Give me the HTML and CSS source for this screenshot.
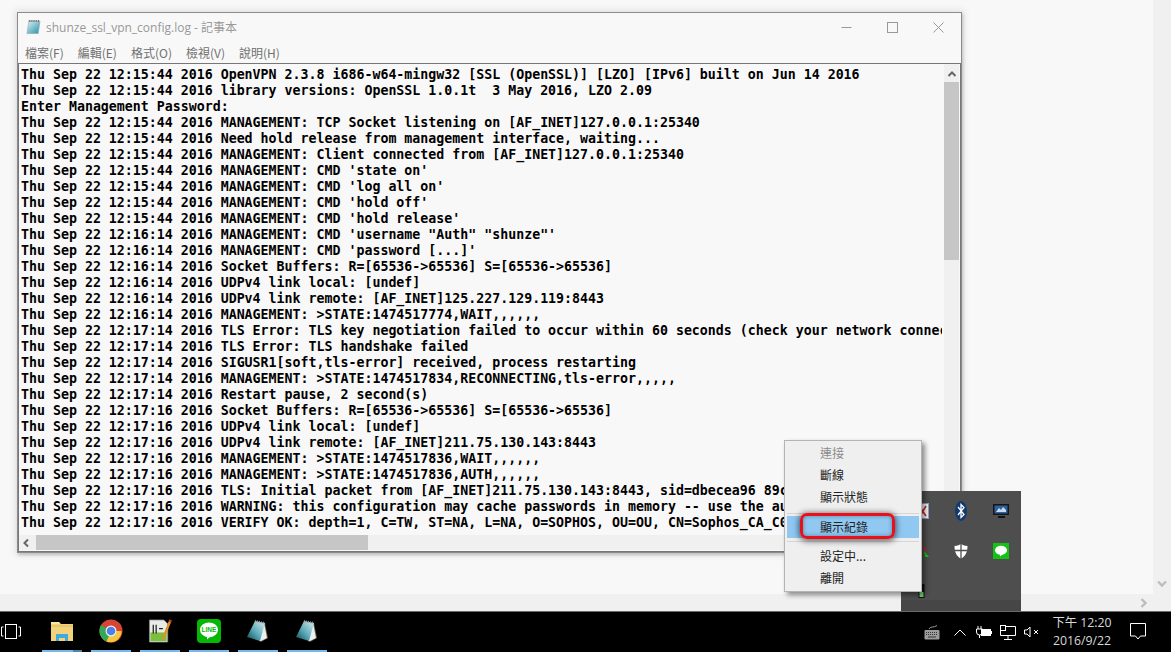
FILE: index.html
```html
<!DOCTYPE html>
<html lang="zh-Hant">
<head>
<meta charset="utf-8">
<title>shunze_ssl_vpn_config.log - 記事本</title>
<link rel="stylesheet" href="styles.css">
</head>
<body>
<div class="screen">
  <div class="viewport">
    <div class="viewport-row">
      <div class="canvas"></div>
      <div class="page-vbar">
        <svg class="chev" viewBox="0 0 10 8"><path d="M1 1.5 5 5.5 9 1.5" fill="none" stroke="#bdbdbd" stroke-width="2.4"/></svg>
      </div>
    </div>
    <div class="page-hbar">
      <svg class="chev-r" viewBox="0 0 8 10"><path d="M1.5 1 5.5 5 1.5 9" fill="none" stroke="#bdbdbd" stroke-width="2.4"/></svg>
    </div>
  </div>

  <section class="window">
    <header class="titlebar">
      <svg class="note-small" viewBox="0 0 16 16">
        <defs><linearGradient id="ng" x1="0" y1="0" x2="1" y2="1"><stop offset="0" stop-color="#dff1f4"/><stop offset=".55" stop-color="#74bccb"/><stop offset="1" stop-color="#2f8ea6"/></linearGradient></defs>
        <path d="M3 2h12l-2 13H1z" fill="url(#ng)" stroke="#8fa5ad" stroke-width=".6"/>
        <path d="M3 1.500h12" stroke="#555" stroke-dasharray="1 1" stroke-width="2"/>
      </svg>
      <span class="title-text">shunze_ssl_vpn_config.log - 記事本</span>
      <div class="win-controls">
        <svg class="wc" viewBox="0 0 11 11"><path d="M.5 5.500h10" stroke="#999" fill="none"/></svg>
        <svg class="wc" viewBox="0 0 11 11"><rect x=".5" y=".5" width="10" height="10" stroke="#999" fill="none"/></svg>
        <svg class="wc" viewBox="0 0 11 11"><path d="M.5.5l10 10M10.500.5l-10 10" stroke="#999" fill="none"/></svg>
      </div>
    </header>
    <nav class="menubar">
      <span>檔案(F)</span><span>編輯(E)</span><span>格式(O)</span><span>檢視(V)</span><span>說明(H)</span>
    </nav>
    <div class="edit">
      <div class="edit-row">
<pre class="log">Thu Sep 22 12:15:44 2016 OpenVPN 2.3.8 i686-w64-mingw32 [SSL (OpenSSL)] [LZO] [IPv6] built on Jun 14 2016
Thu Sep 22 12:15:44 2016 library versions: OpenSSL 1.0.1t  3 May 2016, LZO 2.09
Enter Management Password:
Thu Sep 22 12:15:44 2016 MANAGEMENT: TCP Socket listening on [AF_INET]127.0.0.1:25340
Thu Sep 22 12:15:44 2016 Need hold release from management interface, waiting...
Thu Sep 22 12:15:44 2016 MANAGEMENT: Client connected from [AF_INET]127.0.0.1:25340
Thu Sep 22 12:15:44 2016 MANAGEMENT: CMD 'state on'
Thu Sep 22 12:15:44 2016 MANAGEMENT: CMD 'log all on'
Thu Sep 22 12:15:44 2016 MANAGEMENT: CMD 'hold off'
Thu Sep 22 12:15:44 2016 MANAGEMENT: CMD 'hold release'
Thu Sep 22 12:16:14 2016 MANAGEMENT: CMD 'username "Auth" "shunze"'
Thu Sep 22 12:16:14 2016 MANAGEMENT: CMD 'password [...]'
Thu Sep 22 12:16:14 2016 Socket Buffers: R=[65536->65536] S=[65536->65536]
Thu Sep 22 12:16:14 2016 UDPv4 link local: [undef]
Thu Sep 22 12:16:14 2016 UDPv4 link remote: [AF_INET]125.227.129.119:8443
Thu Sep 22 12:16:14 2016 MANAGEMENT: >STATE:1474517774,WAIT,,,,,,
Thu Sep 22 12:17:14 2016 TLS Error: TLS key negotiation failed to occur within 60 seconds (check your network connectivity)
Thu Sep 22 12:17:14 2016 TLS Error: TLS handshake failed
Thu Sep 22 12:17:14 2016 SIGUSR1[soft,tls-error] received, process restarting
Thu Sep 22 12:17:14 2016 MANAGEMENT: >STATE:1474517834,RECONNECTING,tls-error,,,,,
Thu Sep 22 12:17:14 2016 Restart pause, 2 second(s)
Thu Sep 22 12:17:16 2016 Socket Buffers: R=[65536->65536] S=[65536->65536]
Thu Sep 22 12:17:16 2016 UDPv4 link local: [undef]
Thu Sep 22 12:17:16 2016 UDPv4 link remote: [AF_INET]211.75.130.143:8443
Thu Sep 22 12:17:16 2016 MANAGEMENT: >STATE:1474517836,WAIT,,,,,,
Thu Sep 22 12:17:16 2016 MANAGEMENT: >STATE:1474517836,AUTH,,,,,,
Thu Sep 22 12:17:16 2016 TLS: Initial packet from [AF_INET]211.75.130.143:8443, sid=dbecea96 89c
Thu Sep 22 12:17:16 2016 WARNING: this configuration may cache passwords in memory -- use the auth-nocache
Thu Sep 22 12:17:16 2016 VERIFY OK: depth=1, C=TW, ST=NA, L=NA, O=SOPHOS, OU=OU, CN=Sophos_CA_C0</pre>
        <div class="vbar">
          <svg class="sb-arrow" viewBox="0 0 10 8"><path d="M1.500 6 5 2.500 8.500 6" fill="none" stroke="#666" stroke-width="2"/></svg>
          <div class="vthumb"></div>
        </div>
      </div>
      <div class="hbar">
        <svg class="sb-arrow-l" viewBox="0 0 8 10"><path d="M6 1.500 2.500 5 6 8.500" fill="none" stroke="#666" stroke-width="2"/></svg>
        <div class="hthumb"></div>
      </div>
    </div>
  </section>

  <aside class="tray-flyout">
    <div class="tray-cell">
      <svg class="ti" viewBox="0 0 16 16"><rect x=".5" y=".5" width="15" height="15" fill="#f4f4f4" stroke="#8da0c8"/><path d="M6 3l7 10M13 3 7 13" stroke="#c8242c" stroke-width="1.600"/></svg>
    </div>
    <div class="tray-cell">
      <svg class="ti-bt" viewBox="0 0 12 20"><ellipse cx="6" cy="10" rx="6" ry="10" fill="#123a70"/><path d="M3 6l6 7.500-3 3V3.500l3 3-6 7.500" fill="none" stroke="#fff" stroke-width="1.300"/></svg>
    </div>
    <div class="tray-cell">
      <svg class="ti" viewBox="0 0 16 16"><rect x="0" y="1" width="16" height="11" fill="#151515"/><rect x="1.500" y="2.500" width="13" height="8" fill="#2f5f9c"/><path d="M3 9l3-4 2 2 2-3 3 3v2z" fill="#c7dcef"/><path d="M5 14h7" stroke="#111" stroke-width="2"/></svg>
    </div>
    <div class="tray-cell">
      <svg class="ti" viewBox="0 0 16 16"><path d="M10 3l3 5" stroke="#c8242c" stroke-width="1.500"/><path d="M11 8l5 6h-4z" fill="#18c818"/></svg>
    </div>
    <div class="tray-cell">
      <svg class="ti" viewBox="0 0 16 16"><path d="M8 1c2 1.300 4 2 6.500 2 0 6-2 10.500-6.500 12.500C3.500 13.500 1.500 9 1.500 3 4 3 6 2.300 8 1z" fill="#fff"/><path d="M8 1v15M1.500 7.500h13" stroke="#4e4e4e" stroke-width="1.300"/></svg>
    </div>
    <div class="tray-cell">
      <svg class="ti" viewBox="0 0 16 16"><rect width="16" height="16" fill="#13c313"/><ellipse cx="8" cy="7.300" rx="6" ry="4.600" fill="#fff"/><path d="M7 11h3l-3 2.500z" fill="#fff"/></svg>
    </div>
    <div class="tray-cell">
      <svg class="ti-batt" viewBox="0 0 7 15"><rect x=".5" y="1" width="6" height="14" fill="#111"/><rect x="1.500" y="9" width="4" height="5" fill="#74d47c"/></svg>
    </div>
  </aside>

  <div class="context-menu">
    <div class="menu-item disabled">連接</div>
    <div class="menu-item">斷線</div>
    <div class="menu-item">顯示狀態</div>
    <div class="menu-sep"></div>
    <div class="menu-item active">顯示紀錄<span class="callout"></span></div>
    <div class="menu-sep"></div>
    <div class="menu-item">設定中...</div>
    <div class="menu-item">離開</div>
  </div>

  <footer class="taskbar">
    <svg class="taskview" viewBox="0 0 20 16"><rect x="4.500" y=".5" width="11" height="14" fill="none" stroke="#fff"/><path d="M2.500 3H.5v9h2M17.500 3h2v9h-2" fill="none" stroke="#fff"/></svg>
    <div class="apps">
      <div class="app app-first">
        <svg class="a-ic" viewBox="0 0 24 24"><path d="M1 3h8l2 2h12v17H1z" fill="#f2d27a"/><path d="M1 3h8l1 2H1z" fill="#fbe6a4"/><path d="M1 7h22" stroke="#e0b95c"/><path d="M6 22v-7h12v7h-3v-3H9v3z" fill="#3fa9e0"/></svg>
      </div>
      <div class="app">
        <svg class="a-ic" viewBox="0 0 24 24"><circle cx="12" cy="12" r="11.500" fill="#d94535"/><path d="M12 12 22.500 12A11 11 0 0 1 7 22.300z" fill="#f5c73c"/><path d="M12 12 7.500 22.500A11.500 11.500 0 0 1 2 6z" fill="#35a853"/><circle cx="12" cy="12" r="5.500" fill="#eef2f8"/><circle cx="12" cy="12" r="4.300" fill="#4a80e8"/></svg>
      </div>
      <div class="app">
        <svg class="a-ic" viewBox="0 0 24 25"><path d="M1 1h15l4 4v19H1z" fill="#e8ece6" stroke="#888" stroke-width=".8"/><path d="M2 14h17v9H2z" fill="#7cbf3e"/><path d="M5 6v9M8 6v9M11 10h4" stroke="#222" stroke-width="1.300"/><path d="M23 1 15 21" stroke="#d9952a" stroke-width="2.600"/><path d="M23 1l-1 2" stroke="#c8342c" stroke-width="2.600"/></svg>
      </div>
      <div class="app">
        <svg class="a-ic" viewBox="0 0 24 24"><rect width="24" height="24" rx="4" fill="#05b805"/><ellipse cx="12" cy="10.800" rx="9" ry="7.400" fill="#fff"/><path d="M10 17h4l-4 3.500z" fill="#fff"/><text x="12" y="13.200" class="line-word">LINE</text></svg>
      </div>
      <div class="app">
        <svg class="a-ic" viewBox="0 0 24 24"><defs><linearGradient id="nb" x1="0" y1="1" x2="1" y2="0"><stop offset="0" stop-color="#0f4654"/><stop offset=".45" stop-color="#5aa9b7"/><stop offset="1" stop-color="#dcecef"/></linearGradient></defs><path d="M19 4l3 15-7 4z" fill="#6e5b3e"/><path d="M18 3.500l3 15.500-7 3.500-1-1z" fill="#e9f1f2"/><path d="M9 2l10 2-5 18L1 18z" fill="url(#nb)"/><path d="M9 2l10 2" stroke="#9a9a9a" stroke-width="2" stroke-dasharray="1 1"/></svg>
      </div>
      <div class="app">
        <svg class="a-ic" viewBox="0 0 24 24"><path d="M19 4l3 15-7 4z" fill="#6e5b3e"/><path d="M18 3.500l3 15.500-7 3.500-1-1z" fill="#e9f1f2"/><path d="M9 2l10 2-5 18L1 18z" fill="url(#nb)"/><path d="M9 2l10 2" stroke="#9a9a9a" stroke-width="2" stroke-dasharray="1 1"/></svg>
      </div>
    </div>
    <div class="systray">
      <svg class="s-kb" viewBox="0 0 16 15"><path d="M5 4C6 1 10 3 13 .5" fill="none" stroke="#9a9a9a"/><rect x=".5" y="5" width="15" height="9.500" rx="1" fill="#9c9c9c"/><path d="M2 7.500h12M2 9.500h12" stroke="#333" stroke-dasharray="1 1"/><path d="M4 12h8" stroke="#333"/></svg>
      <svg class="s-up" viewBox="0 0 12 7"><path d="M.5 6.500 6 1l5.500 5.500" fill="none" stroke="#fff"/></svg>
      <svg class="s-batt" viewBox="0 0 16 12"><path d="M2 0v3M5 0v3M.5 3h6v3a3 3 0 0 1-6 0zM3.500 9v3" fill="none" stroke="#fff"/><rect x="5" y="3" width="10" height="7" fill="#fff"/><rect x="15" y="5" width="1" height="3" fill="#fff"/></svg>
      <svg class="s-net" viewBox="0 0 16 15"><path d="M.5 1.500h15v9H.5zM8 10.500V14M4 14.500h8" fill="none" stroke="#fff"/><rect x=".5" y=".5" width="5" height="5" fill="#000" stroke="#fff"/></svg>
      <svg class="s-vol" viewBox="0 0 15 12"><path d="M.5 4h2.500l3-3v10l-3-3H.5z" fill="none" stroke="#fff"/><path d="M10 4l4 4M14 4l-4 4" stroke="#fff"/></svg>
      <div class="clock"><span>下午 12:20</span><span>2016/9/22</span></div>
      <svg class="s-note" viewBox="0 0 16 18"><path d="M.5.5h15v12.500h-5l-2.500 3-2.500-3h-5z" fill="none" stroke="#fff"/></svg>
    </div>
  </footer>
</div>
</body>
</html>
```

FILE: styles.css
```css
html, body {
  margin: 0;
  padding: 0;
  width: 1171px;
  height: 652px;
  overflow: hidden;
}
.screen {
  position: relative;
  width: 1171px;
  height: 652px;
  display: flex;
  flex-direction: column;
  background: #f8f8f8;
  font-family: "Noto Sans CJK TC", "Liberation Sans", sans-serif;
}
.viewport {
  flex: 1;
  display: flex;
  flex-direction: column;
  min-height: 0;
}
.viewport-row {
  flex: 1;
  display: flex;
  min-height: 0;
}
.canvas { flex: 1; }
.page-vbar {
  width: 18px;
  background: #f0f0f0;
  display: flex;
  flex-direction: column;
  justify-content: flex-end;
  align-items: center;
  padding-bottom: 6px;
}
.chev { width: 10px; height: 8px; display: block; }
.page-hbar {
  height: 17px;
  background: #f0f0f0;
  display: flex;
  justify-content: flex-end;
  align-items: center;
  padding-right: 23px;
}
.chev-r { width: 8px; height: 10px; display: block; }

.window {
  position: absolute;
  left: 17px;
  top: 12px;
  width: 943px;
  height: 539px;
  border: 1px solid #8c8c8c;
  background: #f8f8f8;
  box-shadow: 0 0 7px 2px rgba(0, 0, 0, .09), 1px 2px 3px rgba(0, 0, 0, .18);
  display: flex;
  flex-direction: column;
}
.titlebar {
  height: 28px;
  display: flex;
  align-items: center;
  padding-left: 8px;
  color: #999;
  font-family: "Open Sans", "Noto Sans CJK TC", sans-serif;
  font-size: 12px;
}
.note-small { width: 15px; height: 16px; margin-right: 5px; flex: none; }
.title-text { white-space: nowrap; }
.win-controls {
  margin-left: auto;
  display: flex;
  gap: 35px;
  padding-right: 17px;
  align-items: center;
}
.wc { width: 11px; height: 11px; display: block; }
.menubar {
  height: 22px;
  display: flex;
  align-items: center;
  gap: 14px;
  padding-left: 7px;
  color: #707070;
  font-size: 12px;
}
.edit {
  flex: 1;
  min-height: 0;
  border: 1px solid #777;
  display: flex;
  flex-direction: column;
  background: #f8f8f8;
}
.edit-row {
  flex: 1;
  display: flex;
  min-height: 0;
}
.log {
  flex: 1;
  min-width: 0;
  margin: 0 2px 0 0;
  padding: 3px 0 0 2px;
  overflow: hidden;
  font-family: "DejaVu Sans Mono", "Liberation Mono", monospace;
  font-weight: 700;
  font-size: 13.28px;
  line-height: 16px;
  color: #000;
  white-space: pre;
}
.vbar {
  width: 15px;
  margin-right: 1px;
  background: #f0f0f0;
  display: flex;
  flex-direction: column;
  align-items: center;
}
.sb-arrow { width: 10px; height: 8px; margin: 6px 0 4px; flex: none; }
.vthumb { width: 15px; height: 178px; background: #c6c6c6; }
.hbar {
  height: 15px;
  margin-bottom: 1px;
  background: #f0f0f0;
  display: flex;
  align-items: center;
  padding-left: 3px;
}
.sb-arrow-l { width: 8px; height: 10px; flex: none; margin-right: 6px; }
.hthumb { width: 332px; height: 15px; background: #c6c6c6; }

.tray-flyout {
  position: absolute;
  left: 901px;
  top: 491px;
  width: 120px;
  height: 120px;
  background: linear-gradient(#4e4e4e 109px, #464646 109px);
  display: grid;
  grid-template-columns: repeat(3, 40px);
  grid-auto-rows: 40px;
  place-items: center;
}
.ti { width: 16px; height: 16px; display: block; }
.ti-bt { width: 12px; height: 20px; display: block; }
.ti-batt { width: 7px; height: 15px; display: block; margin-top: -1px; }

.context-menu {
  position: absolute;
  left: 784px;
  top: 440px;
  width: 136px;
  height: 149px;
  padding: 1px 0 0;
  border: 1px solid #b4b4b4;
  background: #efefef;
  box-shadow: 3px 3px 5px rgba(0, 0, 0, .45);
  display: flex;
  flex-direction: column;
  align-items: stretch;
  font-size: 12px;
  color: #222;
}
.menu-item {
  position: relative;
  height: 22px;
  line-height: 22px;
  padding-left: 33px;
  margin: 0 2px;
  flex: none;
}
.menu-item.disabled { color: #8c8c8c; }
.menu-item.active { background: #90c8f2; }
.menu-sep {
  height: 1px;
  margin: 5px 2px 2px;
  background: #d6d6d6;
  flex: none;
}
.menu-item.active + .menu-sep { margin: 3px 2px; }
.callout {
  position: absolute;
  left: 13px;
  top: -3px;
  width: 89px;
  height: 20px;
  border: 3px solid #e8101c;
  border-radius: 7px;
  box-shadow: 0 1px 6px 1px rgba(0, 0, 0, .6), inset 0 0 4px rgba(0, 0, 0, .35);
}

.taskbar {
  flex: none;
  background: #000;
  border-top: 1px solid #6a6a6a;
  display: flex;
  align-items: center;
  box-sizing: border-box;
  height: 41px;
}
.taskview { width: 20px; height: 16px; margin-left: 1px; flex: none; }
.apps {
  display: flex;
  gap: 9px;
  margin-left: 21px;
  height: 100%;
}
.app {
  position: relative;
  width: 40px;
  border-bottom: 2px solid #76b9ed;
  box-sizing: border-box;
  display: flex;
  align-items: center;
  justify-content: center;
}
.app-first::after {
  content: "";
  position: absolute;
  left: 31px;
  right: 0;
  bottom: -2px;
  height: 2px;
  background: #4f85ad;
}
.a-ic { width: 24px; height: 24px; display: block; }
.line-word {
  font-family: "Liberation Sans", sans-serif;
  font-weight: 700;
  font-size: 6.5px;
  fill: #05b805;
  text-anchor: middle;
}
.systray {
  margin-left: auto;
  display: flex;
  align-items: center;
  height: 100%;
}
.s-kb { width: 16px; height: 15px; margin-right: 14px; }
.s-up { width: 12px; height: 7px; margin-right: 10px; }
.s-batt { width: 16px; height: 12px; margin-right: 8px; }
.s-net { width: 16px; height: 15px; margin-right: 8px; }
.s-vol { width: 15px; height: 12px; margin-right: 12px; }
.clock {
  width: 62px;
  display: flex;
  flex-direction: column;
  align-items: center;
  font-family: "Open Sans", "Noto Sans CJK TC", sans-serif;
  font-size: 12.3px;
  line-height: 18px;
  color: #d8d8d8;
  margin-right: 17px;
}
.s-note { width: 16px; height: 18px; margin-right: 25px; }
```
